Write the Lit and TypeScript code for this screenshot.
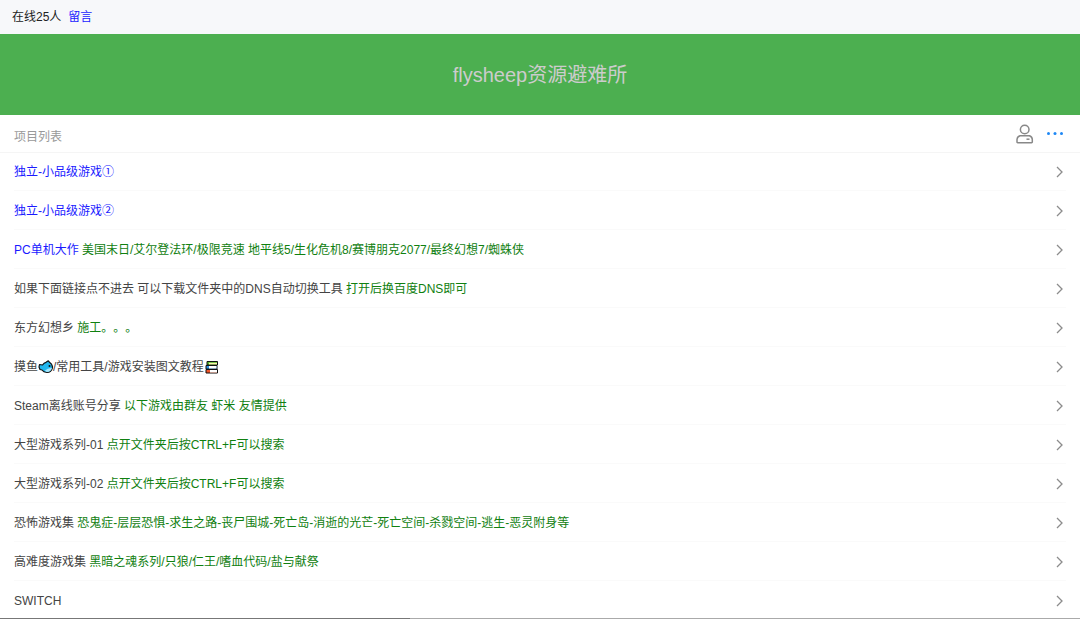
import { LitElement, html, css, svg, nothing } from "lit";
import { customElement, property } from "lit/decorators.js";

interface Project {
  title: string;
  note?: string;
  featured?: boolean;
}

const projects: Project[] = [
  { title: "独立-小品级游戏①", featured: true },
  { title: "独立-小品级游戏②", featured: true },
  { title: "PC单机大作", note: "美国末日/艾尔登法环/极限竞速 地平线5/生化危机8/赛博朋克2077/最终幻想7/蜘蛛侠", featured: true },
  { title: "如果下面链接点不进去 可以下载文件夹中的DNS自动切换工具", note: "打开后换百度DNS即可" },
  { title: "东方幻想乡", note: "施工。。。" },
  { title: "摸鱼{fish}/常用工具/游戏安装图文教程{books}" },
  { title: "Steam离线账号分享", note: "以下游戏由群友 虾米 友情提供" },
  { title: "大型游戏系列-01", note: "点开文件夹后按CTRL+F可以搜索" },
  { title: "大型游戏系列-02", note: "点开文件夹后按CTRL+F可以搜索" },
  { title: "恐怖游戏集", note: "恐鬼症-层层恐惧-求生之路-丧尸围城-死亡岛-消逝的光芒-死亡空间-杀戮空间-逃生-恶灵附身等" },
  { title: "高难度游戏集", note: "黑暗之魂系列/只狼/仁王/嗜血代码/盐与献祭" },
  { title: "SWITCH" },
];

const glyphs: Record<string, unknown> = {
  "{fish}": svg`
    <path d="M1.500 5.500 4.500 6Q6 3.600 8 3.300L10.300 1.800 11.500 3.300Q14.500 5 14.500 8.500Q13.500 13.300 9 13.500Q5.500 13.300 4 11L2 10.500 1 8Z" fill="#22b8ef" stroke="#111" stroke-width="1.200" stroke-linejoin="round"/>
    <path d="M7 11.500Q10 8.500 14 9Q12.800 12.900 9 12.900Q7.500 12.800 7 11.500Z" fill="#a5e5fa"/>
    <circle cx="11.500" cy="7" r="1" fill="#111"/>`,
  "{books}": svg`
    <path d="M3 2.500H13.500V6H3Z" fill="#55b82e" stroke="#111"/>
    <path d="M5 3.800H13V5.400H5Z" fill="#fff3b0"/>
    <path d="M2 6.500H13V10H2Z" fill="#2d8fe0" stroke="#111"/>
    <path d="M5 7H12.500V9.500H5Z" fill="#fff"/>
    <path d="M2 10.500H13.500V14H2Z" fill="#f0562b" stroke="#111"/>
    <path d="M6 11H13V13.500H6Z" fill="#fff"/>`,
};

@customElement("project-row")
class ProjectRow extends LitElement {
  @property({ attribute: false }) project!: Project;

  static styles = css`
    :host {
      display: block;
    }
    .row {
      display: flex;
      align-items: center;
      justify-content: space-between;
      gap: 12px;
      min-height: 38px;
      padding-top: 1px;
      box-sizing: border-box;
      color: #444;
      text-decoration: none;
    }
    .featured {
      color: #1a1aff;
    }
    .note {
      color: #108010;
    }
    .glyph {
      width: 15px;
      height: 16px;
      margin: -2px 0;
      vertical-align: -2px;
    }
    .chevron {
      flex: none;
      width: 14px;
      height: 14px;
    }
  `;

  render() {
    const { title, note, featured } = this.project;
    const parts = title.split(/(\{\w+\})/).map((part) =>
      glyphs[part]
        ? html`<svg class="glyph" viewBox="0 0 15 16" aria-hidden="true">${glyphs[part]}</svg>`
        : part
    );
    return html`<a class="row" href="#">
      <span><span class=${featured ? "featured" : ""}>${parts}</span>${note ? html` <span class="note">${note}</span>` : nothing}</span>
      <svg class="chevron" viewBox="0 0 14 14" fill="none" stroke="#8c8c8c" stroke-width="1.300" aria-hidden="true">
        <path d="M5 2 10 7 5 12" />
      </svg>
    </a>`;
  }
}

@customElement("app-root")
class AppRoot extends LitElement {
  static styles = css`
    :host {
      display: block;
      position: relative;
      background: #fff;
      font: 12px/18px "Liberation Sans", "Noto Sans CJK SC", sans-serif;
      text-spacing-trim: space-all;
    }
    .status {
      display: flex;
      align-items: center;
      gap: 7px;
      height: 34px;
      padding: 0 12px;
      background: #f7f8fa;
      color: #222;
    }
    .status a {
      color: #1a1aff;
      text-decoration: none;
    }
    .banner {
      margin: 0;
      padding: 25px 12px 24px;
      background: #4caf50;
      color: #ccc;
      font-size: 20px;
      font-weight: 400;
      line-height: 32px;
      text-align: center;
    }
    .heading {
      display: flex;
      align-items: center;
      justify-content: space-between;
      height: 37px;
      padding: 0 15px 0 14px;
    }
    .heading h2 {
      margin: 0;
      padding-top: 6px;
      color: #999;
      font-size: 12px;
      font-weight: 400;
    }
    .tools {
      display: flex;
      gap: 10px;
    }
    .tools button {
      display: flex;
      padding: 0;
      border: 0;
      background: none;
    }
    .list {
      margin: 0;
      padding: 0 14px;
      box-shadow: inset 0 1px #f5f5f5;
      list-style: none;
    }
    .item + .item {
      border-top: 1px solid #fafafa;
    }
    .progress {
      position: fixed;
      inset: auto 0 0;
      height: 1px;
      background: #aaa;
    }
    .loaded {
      width: 38%;
      height: 1px;
      background: #777;
    }
  `;

  render() {
    return html`
      <div class="status"><span>在线25人</span><a href="#">留言</a></div>
      <h1 class="banner">flysheep资源避难所</h1>
      <div class="heading">
        <h2>项目列表</h2>
        <div class="tools">
          <button type="button" aria-label="用户">
            <svg width="20" height="20" viewBox="0 0 20 20" fill="none" stroke="#888" stroke-width="1.500">
              <circle cx="9.700" cy="5.500" r="4.300" />
              <path d="M5 11.800H14.500Q17.300 13 17.300 15.500V18Q17.300 18.700 16.600 18.700H2.700Q2 18.700 2 18V15.500Q2 13 5 11.800Z" />
              <path d="M11.500 15.200H14.500" />
            </svg>
          </button>
          <button type="button" aria-label="更多">
            <svg width="20" height="20" viewBox="0 0 20 20" fill="#1e88f5">
              <circle cx="3.500" cy="9.500" r="1.500" />
              <circle cx="10" cy="9.500" r="1.500" />
              <circle cx="16.500" cy="9.500" r="1.500" />
            </svg>
          </button>
        </div>
      </div>
      <ul class="list">
        ${projects.map((project) => html`<li class="item"><project-row .project=${project}></project-row></li>`)}
      </ul>
      <div class="progress"><div class="loaded"></div></div>
    `;
  }
}
